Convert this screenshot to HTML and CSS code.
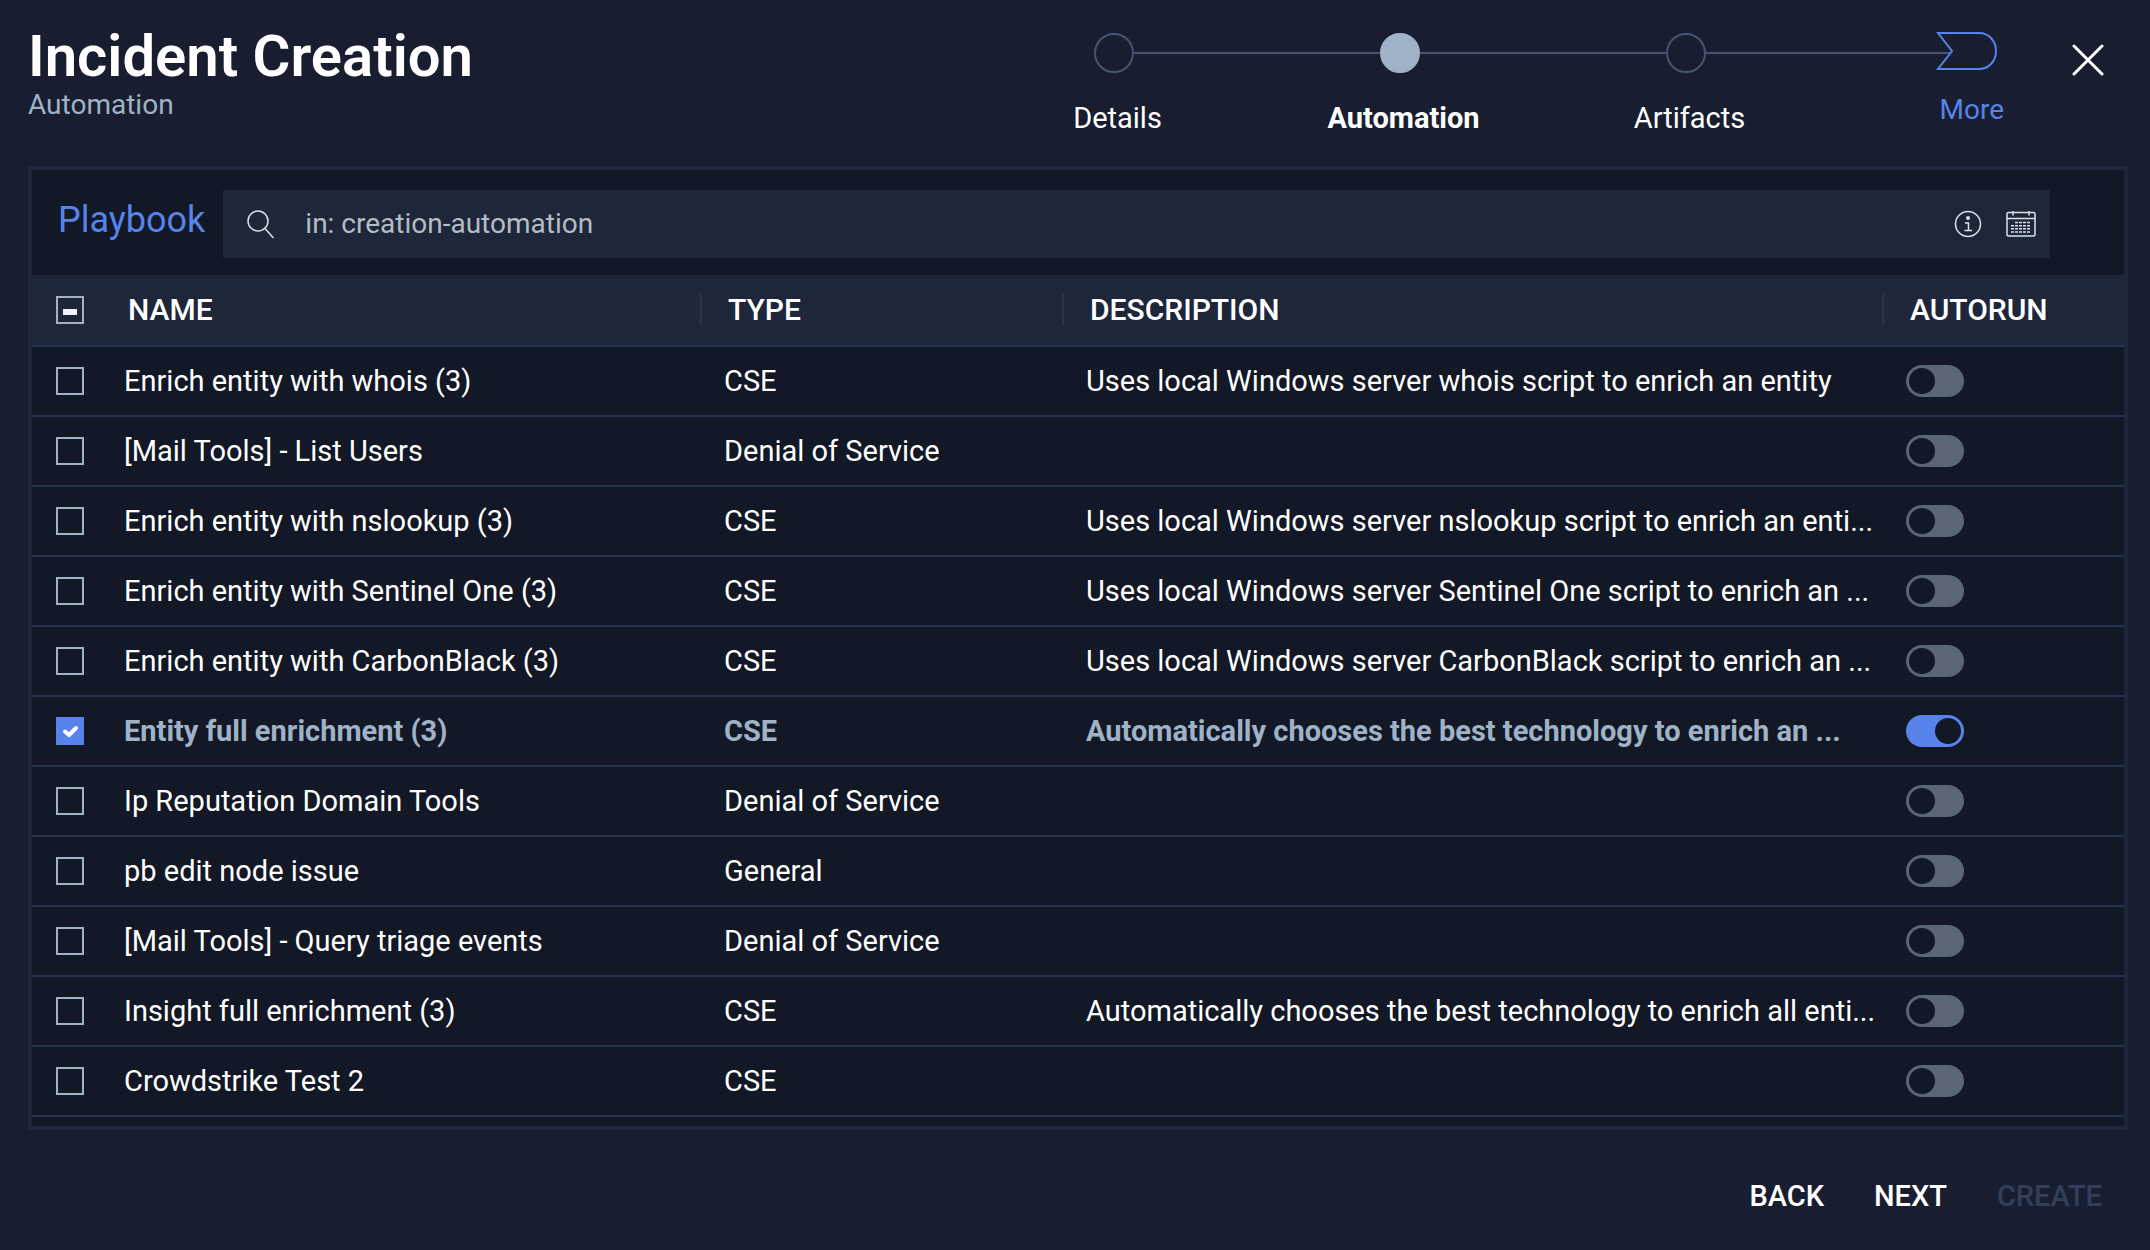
FILE: index.html
```html
<!DOCTYPE html>
<html lang="en">
<head>
<meta charset="UTF-8" />
<meta name="viewport" content="width=device-width, initial-scale=1" />
<title>Incident Creation - Automation</title>
<link rel="stylesheet" href="styles.css">
</head>
<body>
  <header class="header">
    <div class="heading">
      <h1>Incident Creation</h1>
      <p>Automation</p>
    </div>

    <ol class="steps" aria-label="Progress">
      <li class="step">
        <span class="dot"></span>
        <span class="line"></span>
        <span class="step-label">Details</span>
      </li>
      <li class="step active" aria-current="step">
        <span class="dot"></span>
        <span class="line"></span>
        <span class="step-label">Automation</span>
      </li>
      <li class="step">
        <span class="dot"></span>
        <span class="line"></span>
        <span class="step-label">Artifacts</span>
      </li>
      <li class="step-more">
        <button type="button" class="more-btn">
          <svg width="62" height="40" viewBox="0 0 62 40" fill="none" stroke="currentColor" stroke-width="2" aria-hidden="true">
            <path class="more-shape" d="M2 1H43C53 1 60 9 60 19S53 37 43 37H2L16 19Z" />
          </svg>
          <span>More</span>
        </button>
      </li>
    </ol>

    <button type="button" class="close-btn" aria-label="Close">
      <svg width="32" height="32" viewBox="0 0 32 32" fill="none" stroke="currentColor" stroke-width="3" stroke-linecap="round" aria-hidden="true">
        <path d="M2 2L30 30M30 2L2 30" />
      </svg>
    </button>
  </header>

  <main class="panel">
    <div class="toolbar">
      <a href="#playbook" class="playbook-link">Playbook</a>
      <div class="search">
        <svg width="32" height="32" viewBox="0 0 32 32" fill="none" stroke="currentColor" stroke-width="1.500" stroke-linecap="round" aria-hidden="true">
          <circle cx="13" cy="13" r="10" />
          <path d="M20 20.500L28 29.500" />
        </svg>
        <input type="text" id="searchInput" value="in: creation-automation" aria-label="Search playbooks" autocomplete="off" />
        <button type="button" class="icon-btn" aria-label="Search help">
          <svg width="28" height="28" viewBox="0 0 28 28" fill="none" stroke="currentColor" stroke-width="1.500" aria-hidden="true">
            <circle cx="14" cy="14" r="12.500" />
            <circle cx="14" cy="8" r="2" fill="currentColor" stroke="none" />
            <path d="M11 13H14.500V20.500M10.500 20.500H18" />
          </svg>
        </button>
        <button type="button" class="icon-btn" aria-label="Pick dates">
          <svg width="30" height="28" viewBox="0 0 30 28" fill="none" stroke="currentColor" stroke-width="1.500" aria-hidden="true">
            <rect x="1" y="2.500" width="28" height="23.500" rx="1.500" />
            <path d="M1 8.500H29M7 1V5.500M23 1V5.500" />
            <path stroke-dasharray="3 1" d="M9 12.500H25M5 15.700H25M5 18.800H25M5 22H25" />
          </svg>
        </button>
      </div>
    </div>

    <table class="playbooks" aria-label="Playbooks">
      <colgroup>
        <col class="col-check" />
        <col class="col-name" />
        <col class="col-type" />
        <col />
        <col class="col-autorun" />
      </colgroup>
      <thead>
        <tr>
          <th><input type="checkbox" class="check" id="selectAll" aria-label="Select all" /></th>
          <th class="divided">NAME</th>
          <th class="divided">TYPE</th>
          <th class="divided">DESCRIPTION</th>
          <th>AUTORUN</th>
        </tr>
      </thead>
      <tbody id="playbookRows"></tbody>
    </table>
  </main>

  <footer class="footer">
    <button type="button">BACK</button>
    <button type="button">NEXT</button>
    <button type="button" disabled>CREATE</button>
  </footer>

<script>
  (function(){
    const playbookRows = document.getElementById('playbookRows');
    const selectAll = document.getElementById('selectAll');

    const playbooks = [
      {name: 'Enrich entity with whois (3)', type: 'CSE', description: 'Uses local Windows server whois script to enrich an entity'},
      {name: '[Mail Tools] - List Users', type: 'Denial of Service', description: ''},
      {name: 'Enrich entity with nslookup (3)', type: 'CSE', description: 'Uses local Windows server nslookup script to enrich an enti...'},
      {name: 'Enrich entity with Sentinel One (3)', type: 'CSE', description: 'Uses local Windows server Sentinel One script to enrich an ...'},
      {name: 'Enrich entity with CarbonBlack (3)', type: 'CSE', description: 'Uses local Windows server CarbonBlack script to enrich an ...'},
      {name: 'Entity full enrichment (3)', type: 'CSE', description: 'Automatically chooses the best technology to enrich an ...', selected: true},
      {name: 'Ip Reputation Domain Tools', type: 'Denial of Service', description: ''},
      {name: 'pb edit node issue', type: 'General', description: ''},
      {name: '[Mail Tools] - Query triage events', type: 'Denial of Service', description: ''},
      {name: 'Insight full enrichment (3)', type: 'CSE', description: 'Automatically chooses the best technology to enrich all enti...'},
      {name: 'Crowdstrike Test 2', type: 'CSE', description: ''}
    ];

    function addInput(tr, className, label, checked) {
      const td = document.createElement('td');
      const input = document.createElement('input');
      input.type = 'checkbox';
      input.className = className;
      input.checked = !!checked;
      input.setAttribute('aria-label', label);
      td.appendChild(input);
      tr.appendChild(td);
      return input;
    }

    // Dash when only some rows are ticked
    function updateSelectAll() {
      const checks = [...playbookRows.querySelectorAll('.check')];
      const count = checks.filter(c => c.checked).length;
      selectAll.checked = count === checks.length;
      selectAll.indeterminate = count > 0 && count < checks.length;
    }

    playbooks.forEach(playbook => {
      const tr = document.createElement('tr');
      tr.classList.toggle('selected', !!playbook.selected);
      const check = addInput(tr, 'check', 'Select ' + playbook.name, playbook.selected);
      check.addEventListener('change', () => {
        tr.classList.toggle('selected', check.checked);
        updateSelectAll();
      });
      ['name', 'type', 'description'].forEach(field => {
        const td = document.createElement('td');
        td.textContent = playbook[field];
        tr.appendChild(td);
      });
      addInput(tr, 'toggle', 'Autorun ' + playbook.name, playbook.selected);
      playbookRows.appendChild(tr);
    });

    selectAll.addEventListener('change', () => {
      playbookRows.querySelectorAll('tr').forEach(tr => {
        tr.querySelector('.check').checked = selectAll.checked;
        tr.classList.toggle('selected', selectAll.checked);
      });
    });

    updateSelectAll();
  })();
</script>
</body>
</html>
```
FILE: styles.css
```css
* {
  box-sizing: border-box;
}
body {
  margin: 0;
  min-height: 100vh;
  display: flex;
  flex-direction: column;
  font-family: Roboto, 'Liberation Sans', sans-serif;
  font-size: 28px;
  line-height: 32px;
  background: #181e2f;
  color: #fff;
}
button {
  padding: 0;
  border: none;
  background: none;
  color: inherit;
  font: inherit;
  cursor: pointer;
}
svg {
  display: block;
}

/* Header */
.header {
  display: flex;
  align-items: flex-start;
  padding: 24px 46px 32px 28px;
}
.heading {
  flex: 1;
}
h1 {
  margin: 0;
  font-size: 58px;
  line-height: 64px;
  font-weight: 600;
}
.heading p {
  margin: 0;
  line-height: 34px;
  color: #a0b2c6;
}
.steps {
  display: flex;
  list-style: none;
  margin: 0 68px 0 0;
  padding: 8px 0 0;
}
.step {
  display: grid;
  grid-template-columns: 40px 246px;
  grid-template-rows: 42px 32px;
  align-items: center;
  row-gap: 28px;
}
.dot {
  width: 40px;
  height: 40px;
  border: 2px solid #475473;
  border-radius: 50%;
}
.line {
  height: 2px;
  background: #475473;
}
.step-label {
  justify-self: center;
  padding-left: 8px;
  font-size: 29px;
  white-space: nowrap;
}
.active .dot {
  background: #a0b2c6;
  border-color: #a0b2c6;
}
.active .step-label {
  font-weight: 700;
}
.step-more {
  margin-left: -16px;
}
.more-btn {
  display: flex;
  flex-direction: column;
  gap: 22px;
  color: #5783ea;
}
.more-btn span {
  padding-left: 4px;
}
.more-shape {
  fill: #181e2f;
}
.close-btn {
  margin-top: 20px;
}

/* Playbook panel */
.panel {
  flex: 1;
  margin: 0 22px 0 28px;
  border: 4px solid #1d263b;
  background: #121825;
}
.toolbar {
  display: flex;
  align-items: center;
  gap: 18px;
  padding: 20px 74px 17px 26px;
}
.playbook-link {
  padding-bottom: 8px;
  font-size: 36px;
  color: #5783ea;
  text-decoration: none;
}
.search {
  flex: 1;
  display: flex;
  align-items: center;
  gap: 24px;
  height: 68px;
  padding: 0 14px 0 22px;
  background: #1e263a;
  color: #dce2e8;
}
.search input {
  flex: 1;
  min-width: 0;
  padding: 0 4px;
  border: none;
  outline: none;
  background: none;
  font: inherit;
  color: #b4bcc4;
}
.playbooks {
  width: 100%;
  table-layout: fixed;
  border-collapse: separate;
  border-spacing: 0;
}
.col-check {
  width: 72px;
}
.col-name {
  width: 600px;
}
.col-type {
  width: 362px;
}
.col-autorun {
  width: 238px;
}
th, td {
  height: 70px;
  padding: 0 0 0 20px;
  border-bottom: 2px solid #263350;
  font-size: 29px;
  text-align: left;
  white-space: nowrap;
  overflow: hidden;
  text-overflow: ellipsis;
}
th {
  height: 72px;
  padding-left: 24px;
  background: #1e263a;
  font-size: 30px;
  font-weight: 500;
}
td:first-child {
  padding-left: 24px;
}
.divided {
  background: #1e263a linear-gradient(#2e3340, #2e3340) right 2px center / 2px 32px no-repeat;
}
th:first-child {
  background: #1e263a;
}
.selected td {
  font-weight: 700;
  color: #a0b2c6;
}

/* Checkboxes and switches */
.check, .toggle {
  display: block;
  appearance: none;
  margin: 0;
  cursor: pointer;
}
.check {
  width: 28px;
  height: 28px;
  border: 2px solid #a0b2c6;
}
.check:checked {
  border-color: #5783ea;
  background: #5783ea url("data:image/svg+xml,%3Csvg xmlns='http://www.w3.org/2000/svg' viewBox='0 0 24 24' fill='none' stroke='white' stroke-width='4' stroke-linecap='round' stroke-linejoin='round'%3E%3Cpath d='M7 12.500L11 16L18 9'/%3E%3C/svg%3E") center / 24px no-repeat;
}
.check:indeterminate {
  background: linear-gradient(#f0f3f6, #f0f3f6) center 11px / 14px 6px no-repeat;
}
.toggle {
  width: 58px;
  height: 32px;
  padding: 3px;
  border-radius: 16px;
  background: #5b6675;
}
.toggle::before {
  content: '';
  display: block;
  width: 26px;
  height: 26px;
  border-radius: 50%;
  background: #121825;
}
.toggle:checked {
  background: #5783ea;
}
.toggle:checked::before {
  margin-left: auto;
}

/* Footer */
.footer {
  display: flex;
  justify-content: flex-end;
  gap: 50px;
  height: 120px;
  padding: 12px 48px 0 0;
}
.footer button {
  font-size: 29px;
  font-weight: 500;
}
.footer button:disabled {
  color: #323f5b;
  cursor: default;
}
```
